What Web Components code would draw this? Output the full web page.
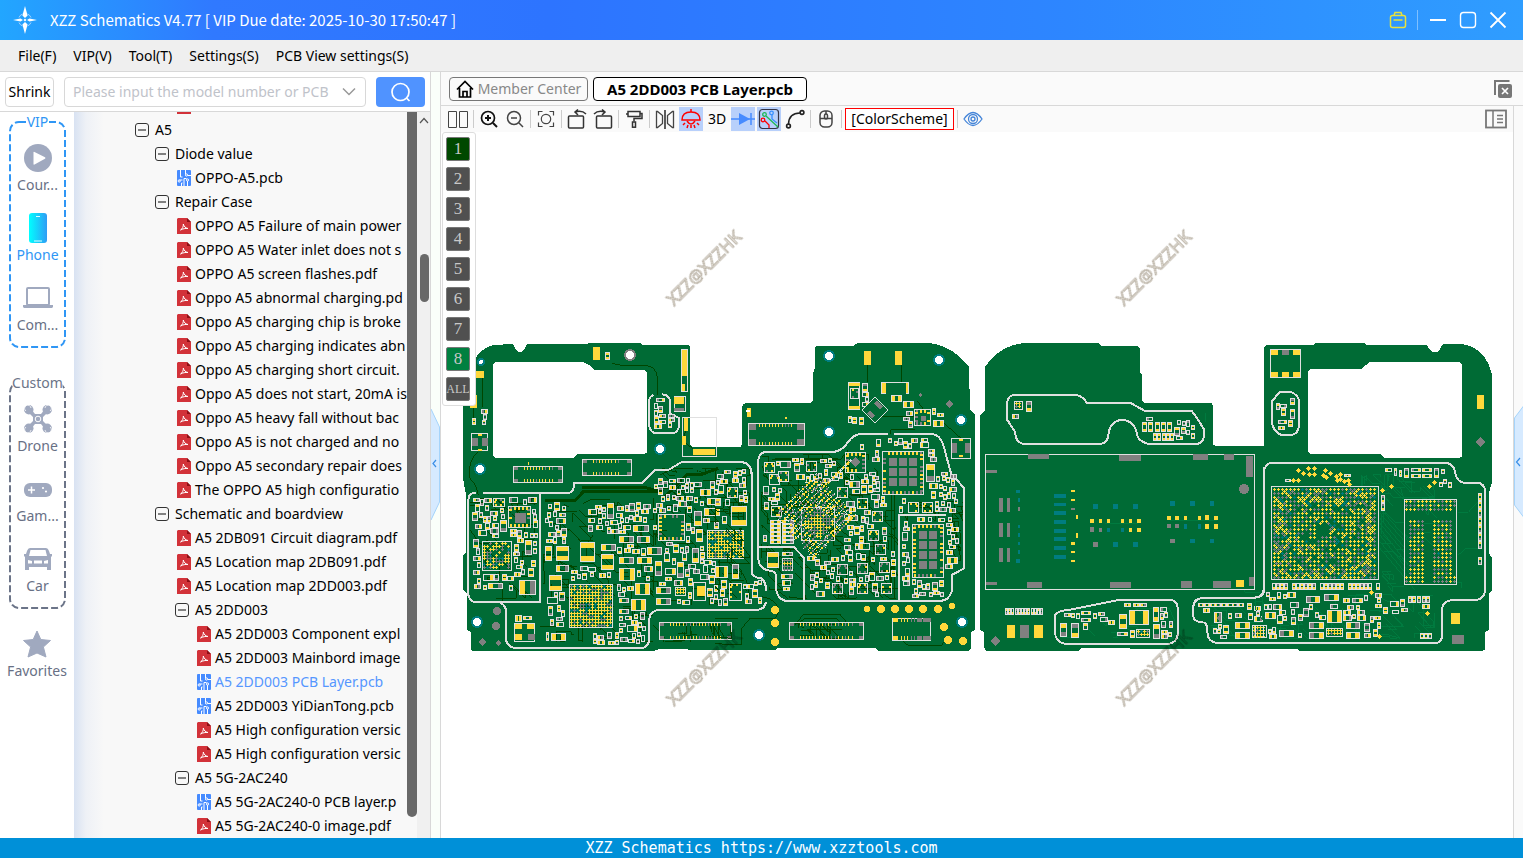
<!DOCTYPE html>
<html lang="en">
<head>
<meta charset="utf-8">
<title>XZZ Schematics</title>
<style>
html,body{margin:0;height:100%}
body{font:14px/20px "Noto Sans","Open Sans",sans-serif;color:#000;background:#fff;overflow:hidden}
</style>
</head>
<body>
<xzz-app></xzz-app>
<script>
const BASE = '*{box-sizing:border-box}button{font:inherit;color:inherit;background:none;border:0;padding:0;margin:0;display:flex;align-items:center;justify-content:center}svg{display:block}';
function define(name, css, html, init) {
  const t = document.createElement('template');
  customElements.define(name, class extends HTMLElement {
    connectedCallback() {
      if (this.shadowRoot) return;
      t.innerHTML = `<style>${BASE}${css}</style>${typeof html === 'function' ? html(this) : html}`;
      this.attachShadow({mode: 'open'}).append(t.content.cloneNode(true));
      if (init) init(this.shadowRoot, this);
    }
  });
}

/* ---------- icons ---------- */
const G = '#a0a9bf';
const ICONS = {
  logo: [28, '<g fill="#fff"><path d="M14 0l2.600 9.500L14 12l-2.600-2.500zM14 28l-2.600-9.500L14 16l2.600 2.500zM2 14l7.500-1.500L12 14l-2.500 1.500zM26 14l-7.500-1.500L16 14l2.500 1.500z"/><path d="M14 12.500l1.500 1.500-1.500 1.500-1.500-1.500z"/></g><g fill="none" stroke="#a8d4ff" stroke-width="1"><path d="M8 11.500A6.500 6.500 0 0 1 11.500 8M16.500 8A6.500 6.500 0 0 1 20 11.500M20 16.500A6.500 6.500 0 0 1 16.500 20M11.500 20A6.500 6.500 0 0 1 8 16.500"/></g>'],
  bag: [18, '<g fill="none" stroke="#e8e23c" stroke-width="1.500"><rect x="1.500" y="4.500" width="15" height="12" rx="2"/><path d="M5 4.500l1-3h6l1 3M4.500 9h9"/></g>'],
  min: [18, '<path d="M1 9h16" stroke="#fff" stroke-width="2"/>'],
  max: [18, '<rect x="1.500" y="1.500" width="15" height="15" rx="3" fill="none" stroke="#fff" stroke-width="1.400"/>'],
  close: [18, '<path d="M1.500 1.500l15 15M16.500 1.500l-15 15" stroke="#fff" stroke-width="1.800"/>'],
  chevron: [16, '<path d="M2 4.500l6 6 6-6" fill="none" stroke="#999" stroke-width="1.500"/>'],
  search: [22, '<circle cx="10.500" cy="11" r="8.500" fill="none" stroke="#fff" stroke-width="1.700"/><path d="M16.500 17l3 3" stroke="#fff" stroke-width="1.700"/>'],
  play: [28, `<circle cx="14" cy="14" r="14" fill="${G}"/><path d="M9.500 8.500Q9.500 7.500 10.500 8L21 13.300Q22 14 21 14.700L10.500 20.500Q9.500 21 9.500 20z" fill="#fff"/>`],
  phone: [32, '<defs><linearGradient id="p"><stop stop-color="#0ff"/><stop offset="1" stop-color="#2f9cf5"/></linearGradient></defs><rect x="7" y="1" width="18" height="30" rx="3" fill="url(#p)"/><path d="M14 4.500h4M12 29h8" stroke="#dff" stroke-width="1.200"/>'],
  laptop: [30, `<rect x="4" y="5" width="22" height="17" rx="1" fill="none" stroke="${G}" stroke-width="2"/><path d="M0 22h12v1h6v-1h12v2l-1 1H1l-1-1z" fill="${G}"/>`],
  drone: [28, `<g fill="${G}"><circle cx="4.800" cy="4.800" r="4.700"/><circle cx="23.200" cy="4.800" r="4.700"/><circle cx="4.800" cy="23.200" r="4.700"/><circle cx="23.200" cy="23.200" r="4.700"/><path d="M4 7l3-3 4 5h6l4-5 3 3-5 5v4l5 5-3 3-4-5h-6l-4 5-3-3 5-5v-4z"/></g><circle cx="14" cy="14" r="2.800" fill="none" stroke="#fff"/><g fill="none" stroke="#fff" stroke-width=".8"><path d="M2 6a3.200 3.200 0 1 1 5-3M21 3a3.200 3.200 0 1 1 5 3M2 22a3.200 3.200 0 1 0 5 3M21 25a3.200 3.200 0 1 0 5-3"/></g>`],
  pad: [28, `<rect y="8" width="28" height="14" rx="6" fill="${G}"/><path d="M4 15h7M7.500 11.500v7" stroke="#fff" stroke-width="1.500"/><circle cx="19" cy="13" r="1.100" fill="#fff"/><circle cx="22" cy="16.500" r="1.100" fill="#fff"/>`],
  car: [28, `<path d="M6 3h16q2 0 3 3l1 3 2 0v2l-1 1v13h-4v-3H5v3H1V12L0 11V9h2l1-3q1-3 3-3z" fill="${G}"/><path d="M6.500 5h15L23 11H5zM4 15l4 1v2.500H4zM24 15l-4 1v2.500h4zM10 15.500h8v3h-8z" fill="#fff"/>`],
  star: [28, `<path d="M14 1l3.800 8.500 9.700 1-7.100 6.500 2.600 10L14 23l-9 4 2.600-10L.5 10.500l9.700-1z" fill="${G}" stroke="${G}" stroke-linejoin="round"/>`],
  minus: [14, '<rect x=".5" y=".5" width="13" height="13" rx="2.500" fill="none" stroke="#333"/><path d="M3 7h8" stroke="#333" stroke-width="1.200"/>'],
  pdf: [16, '<path d="M2 0h9l4 4v12H1V1z" fill="#d23239"/><path d="M11 0v4h4z" fill="#8e0f15"/><path d="M4.500 12C6.300 11 7.600 8.500 7.300 6c.8 2.600 2 4 4.700 4.500-2.800-.3-5 .3-7.500 1.500z" fill="none" stroke="#fff" stroke-width="1"/>'],
  pcb: [16, '<rect x="1" width="14" height="16" rx="1" fill="#468bff"/><g fill="none" stroke="#fff" stroke-width="1"><path d="M4.500 0v7h2M9.500 0v4M3.500 10h3M8 16V8.500h2.500M5.500 16v-3h1M11.500 16v-5M12 5.500h3"/><circle cx="3.200" cy="11" r="1.100"/><circle cx="10.500" cy="5" r="1.100"/><circle cx="11.500" cy="10" r="1.100"/></g>'],
  home: [18, '<path d="M1 9.500L9 1.500l8 8M3.500 8v9h11V8M7 17v-5.500h4V17" fill="none" stroke="#000" stroke-width="1.700"/>'],
  closeall: [18, '<path d="M1 15V1H15.500" fill="none" stroke="#777" stroke-width="2"/><rect x="4" y="4" width="14" height="14" rx="2" fill="#777"/><path d="M8 8l6 6M14 8l-6 6" stroke="#fff" stroke-width="1.700"/>'],
  panel: [22, '<rect x="1" y="2.500" width="20" height="17" fill="none" stroke="#777" stroke-width="1.800"/><path d="M8 3v16" stroke="#777" stroke-width="1.500"/><path d="M12 7.500h6M12 11h6M12 14.500h6" stroke="#777" stroke-width="1.500"/>'],
  cols: [20, '<path d="M.5 2.500h8v16h-8zM11.500 2.500h8v16h-8z" fill="none" stroke="#444"/>'],
  zin: [18, '<circle cx="8" cy="8" r="6.500" fill="none" stroke="#111" stroke-width="1.700"/><path d="M5 8h6M8 5v6" stroke="#111" stroke-width="2"/><path d="M13 13l4 4" stroke="#111" stroke-width="2"/>'],
  zout: [18, '<circle cx="8" cy="8" r="6.500" fill="none" stroke="#444" stroke-width="1.500"/><path d="M5 8h6M13 13l4 4" stroke="#444" stroke-width="1.500"/>'],
  focus: [18, '<g fill="none" stroke="#444" stroke-width="1.200"><path d="M1.500 5.500v-4h4M12.500 1.500h4v4M16.500 12.500v4h-4M5.500 16.500h-4v-4"/><circle cx="9" cy="9" r="4.700"/></g>'],
  rotl: [20, '<g fill="none" stroke="#333" stroke-width="1.500"><rect x="1.500" y="7" width="15" height="12" rx="1"/><path d="M19 5Q15 1 8 3M11 .5L8 3l3 3"/></g>'],
  rotr: [20, '<g fill="none" stroke="#333" stroke-width="1.500"><rect x="3.500" y="7" width="15" height="12" rx="1"/><path d="M1 5Q5 1 12 3M9 .5L12 3 9 6"/></g>'],
  roller: [18, '<g fill="none" stroke="#333" stroke-width="1.500"><path d="M3 1.500h12v5H3zM15 3.500h2v5H9v3M1 4h2"/><rect x="7.500" y="12" width="3" height="5.200"/></g>'],
  flip: [20, '<g fill="none" stroke="#444" stroke-width="1.300"><path d="M1.500 2.500h1l5 4v8l-5 4h-1zM18.500 2.500h-1l-5 4v8l5 4h1z"/></g><path d="M10 1v19" stroke="#333" stroke-width="1.600"/>'],
  lamp: [22, '<g fill="none" stroke="#f00" stroke-width="1.500"><path d="M2 12q0-8 9-8t9 8z"/><path d="M11 4V1M7 13q4 6 8 0M5 15l-2 2M17 15l2 2M8 17l-1 3M14 17l1 3M11 17v3"/></g>'],
  diode: [24, '<path d="M0 12h24M20 6v12" stroke="#468bff" stroke-width="1.500"/><path d="M8 6l11 6-11 6z" fill="#468bff"/>'],
  net: [22, '<rect x="1.500" y="1.500" width="19" height="19" rx="3" fill="none" stroke="#334" stroke-width="1.200"/><g fill="none" stroke-width="1.300"><path d="M8 8l12 11" stroke="#1db954"/><circle cx="6.500" cy="6.500" r="1.800" stroke="#1db954"/><path d="M14 7v4l5 4" stroke="#3890ff"/><circle cx="13.500" cy="5" r="1.800" stroke="#3890ff"/><path d="M7 13l4 4v3" stroke="#f00"/><circle cx="5" cy="12" r="1.800" stroke="#f00"/></g>'],
  curve: [20, '<g fill="none" stroke="#222" stroke-width="1.600"><path d="M3.500 15Q4 4 15 4"/><circle cx="3.500" cy="17" r="1.900"/><circle cx="17" cy="3.500" r="1.900"/></g>'],
  mouse: [18, '<g fill="none" stroke="#444" stroke-width="1.500"><rect x="3" y="1" width="12" height="16" rx="4.500"/><path d="M3 8.500h12M9 1v3"/><rect x="7.500" y="4" width="3" height="5" rx="1.500"/></g>'],
  eye: [20, '<g fill="none" stroke="#4585d8" stroke-width="1.300"><path d="M1 10q9-13 18 0-9 13-18 0z"/><circle cx="10" cy="10" r="4.500"/><circle cx="10" cy="10" r="2"/></g>'],
  up: [14, '<path d="M3 9l4-4.500L11 9" fill="none" stroke="#555" stroke-width="1.200"/>']
};
define('ui-icon', ':host{display:block;flex:none}', h => {
  const [s, d] = ICONS[h.getAttribute('name')];
  return `<svg width="${s}" height="${s}" viewBox="0 0 ${s} ${s}" aria-hidden="true">${d}</svg>`;
});
const icon = n => `<ui-icon name="${n}"></ui-icon>`;

/* ---------- window chrome ---------- */
define('title-bar', `:host{display:flex;align-items:center;height:40px;padding:0 16px 0 11px;gap:11px;color:#fff;background:linear-gradient(90deg,#22a6ff,#3079ff 14%,#2d74ff 36%,#2d86ff 70%,#2f9dff)}
h1{font:15px/20px "Noto Sans CJK SC","Noto Sans",sans-serif;margin:0;flex:1;white-space:pre}div{display:flex;gap:12px;align-items:center}i{width:1px;height:20px;background:#7fc0ff;margin:0 -1px 0 -2px}`,
`${icon('logo')}<h1>XZZ Schematics V4.77 [ VIP Due date: 2025-10-30 17:50:47 ]</h1>
<div><button aria-label="Account">${icon('bag')}</button><i></i><button aria-label="Minimize">${icon('min')}</button><button aria-label="Maximize">${icon('max')}</button><button aria-label="Close">${icon('close')}</button></div>`);

define('menu-bar', ':host{display:flex;height:32px;align-items:center;padding:0 18px;gap:17px;background:#efefef;border-bottom:1px solid #d8d8d8}',
  ['File(F)', 'VIP(V)', 'Tool(T)', 'Settings(S)', 'PCB View settings(S)'].map(t => `<button>${t}</button>`).join(''));

define('search-row', `:host{display:flex;gap:10px;padding:5px 5px 4px;height:40px;border-bottom:1px solid #d8d8d8;background:#fff}
.s{width:49px;border:1px solid #d8d8d8;border-radius:4px}
label{flex:1;display:flex;align-items:center;border:1px solid #d8d8d8;border-radius:4px;padding:0 8px;min-width:0}
input{flex:1;min-width:0;border:0;outline:0;padding:0;font:inherit;background:none}input::placeholder{color:#bfc3ca;opacity:1}
.g{width:49px;background:#5093ff;border-radius:4px}`,
`<button class="s">Shrink</button><label><input aria-label="Model" placeholder="Please input the model number or PCB">${icon('chevron')}</label><button class="g" aria-label="Search">${icon('search')}</button>`);

/* ---------- side navigation ---------- */
define('nav-item', `:host{display:block}button{width:100%;flex-direction:column;justify-content:flex-start;padding-top:4px;height:56px;gap:3px;color:#687085}
:host([on]) button{color:#2f96f5}span{height:28px;display:flex;align-items:center}`,
  h => `<button><span>${icon(h.getAttribute('icon'))}</span><slot></slot></button>`);
define('nav-group', `:host{display:flex;flex-direction:column;gap:14px;position:relative;margin:10px 8px 0 9px;padding:18px 0 11px;--c:#6b7488}
:host([blue]){--c:#2f96f5}
svg{position:absolute;inset:0;width:100%;height:100%;overflow:visible}
b{position:absolute;top:-10px;left:50%;transform:translateX(-50%);font-weight:400;color:var(--c);background:#fff}`,
  h => `<svg aria-hidden="true"><rect x="1" y="0" width="55" height="100%" rx="9" fill="none" stroke="var(--c)" stroke-width="2" stroke-dasharray="7 3"/></svg><b>${h.getAttribute('label')}</b><slot></slot>`);
define('side-nav', ':host{display:block;width:74px;background:#fff}nav-group+nav-group{margin-top:36px}nav-group+nav-item{margin-top:18px}',
`<nav-group label="VIP" blue><nav-item icon="play">Cour...</nav-item><nav-item icon="phone" on>Phone</nav-item><nav-item icon="laptop">Com...</nav-item></nav-group>
<nav-group label="Custom"><nav-item icon="drone">Drone</nav-item><nav-item icon="pad">Gam...</nav-item><nav-item icon="car">Car</nav-item></nav-group>
<nav-item icon="star">Favorites</nav-item>`);

/* ---------- file tree ---------- */
const TREE = [
  [2, 'pdf', ''], [0, 'minus', 'A5'], [1, 'minus', 'Diode value'], [2, 'pcb', 'OPPO-A5.pcb'], [1, 'minus', 'Repair Case'],
  [2, 'pdf', 'OPPO A5 Failure of main power'], [2, 'pdf', 'OPPO A5 Water inlet does not s'], [2, 'pdf', 'OPPO A5 screen flashes.pdf'],
  [2, 'pdf', 'Oppo A5 abnormal charging.pd'], [2, 'pdf', 'Oppo A5 charging chip is broke'], [2, 'pdf', 'Oppo A5 charging indicates abn'],
  [2, 'pdf', 'Oppo A5 charging short circuit.'], [2, 'pdf', 'Oppo A5 does not start, 20mA is'], [2, 'pdf', 'Oppo A5 heavy fall without bac'],
  [2, 'pdf', 'Oppo A5 is not charged and no'], [2, 'pdf', 'Oppo A5 secondary repair does'], [2, 'pdf', 'The OPPO A5 high configuratio'],
  [1, 'minus', 'Schematic and boardview'], [2, 'pdf', 'A5 2DB091 Circuit diagram.pdf'], [2, 'pdf', 'A5 Location map 2DB091.pdf'],
  [2, 'pdf', 'A5 Location map 2DD003.pdf'], [2, 'minus', 'A5 2DD003'], [3, 'pdf', 'A5 2DD003 Component expl'], [3, 'pdf', 'A5 2DD003 Mainbord image'],
  [3, 'pcb', 'A5 2DD003 PCB Layer.pcb', 1], [3, 'pcb', 'A5 2DD003 YiDianTong.pcb'], [3, 'pdf', 'A5 High configuration versic'],
  [3, 'pdf', 'A5 High configuration versic'], [2, 'minus', 'A5 5G-2AC240'], [3, 'pcb', 'A5 5G-2AC240-0 PCB layer.p'], [3, 'pdf', 'A5 5G-2AC240-0 image.pdf']];
define('file-tree', `:host{display:grid;grid-template-columns:1fr 10px 13px;flex:1;min-width:0;overflow:hidden;background:linear-gradient(90deg,#d8e2f2,#eef1f6 12px,#f8f8f8 30px)}
ul{list-style:none;margin:-18px 0 0;padding:0 0 0 61px;overflow:hidden;min-width:0}
li{display:flex;align-items:center;height:24px;white-space:nowrap;padding-left:calc(var(--n)*20px)}
span{width:20px;flex:none}.f{padding-left:1px}a{color:inherit;text-decoration:none}.on{color:#5596ff}
.k{background:#686868;border-radius:0 0 5px 5px;margin-bottom:21px}
.t{background:#f0f0f0;display:flex;flex-direction:column;align-items:center;padding:2px 0 0 1px}.t i{width:9px;height:48px;margin-top:126px;border-radius:5px;background:#686868}`,
`<ul>${TREE.map(([n, k, t, on]) => `<li style="--n:${n}" class="${on ? 'on' : ''}"><span class="${k === 'minus' ? '' : 'f'}">${icon(k)}</span>${k === 'minus' ? t : t && `<a href="#">${t}</a>`}</li>`).join('')}</ul><div class="k"></div><div class="t">${icon('up')}<i></i></div>`);

/* ---------- document area ---------- */
define('doc-tabs', `:host{display:flex;align-items:center;gap:5px;height:34px;padding:0 11px 0 8px;background:#fafafa;border-bottom:1px solid #d8d8d8}
button{height:24px;border-radius:4px}.m{width:139px;gap:4px;border:1px solid #777;color:#888}.a{width:214px;border:1px solid #000;background:#fff;font-size:15px;font-weight:700}.x{margin-left:auto}`,
`<button class="m">${icon('home')}Member Center</button><button class="a">A5 2DD003 PCB Layer.pcb</button><button class="x" aria-label="Close all">${icon('closeall')}</button>`);

define('tool-bar', `:host{display:flex;align-items:center;gap:2px;height:26px;padding:0 5px;background:#fafafa}
button{width:24px;height:24px}.on{background:#b8d0fb}i{width:3px;height:18px;background:linear-gradient(90deg,transparent 1px,#ccc 1px,#ccc 2px,transparent 2px)}
.c{width:109px;height:22px;border:1px solid #f00;background:#fff}.p{margin-left:auto}`,
  ['cols', '', 'zin', 'zout', '', 'focus', '', 'rotl', 'rotr', '', 'roller', '', 'flip', '*lamp', '3D', '*diode', '*net', 'curve', '', 'mouse', '', '[ColorScheme]', '', 'eye', 'panel'].map(n => {
    if (!n) return '<i></i>';
    if (n === '3D') return '<button>3D</button>';
    if (n[0] === '[') return `<button class="c">${n}</button>`;
    const k = n.replace('*', '');
    return `<button aria-label="${k}" class="${n[0] === '*' ? 'on' : n === 'panel' ? 'p' : ''}">${icon(k)}</button>`;
  }).join(''));

define('layer-panel', `:host{display:grid;gap:6px;padding:4px 4px 4px 3px;width:34px;background:#fff;border:1px solid #ddd;border-radius:3px;font:17px/22px "Liberation Serif",serif;color:#c8c8c8}
button{height:24px;width:24px;background:#505050;border:1px solid #777;border-radius:2px}.g{background:#004800}.h{background:#008040}.l{font-size:12px}`,
  [1, 2, 3, 4, 5, 6, 7, 8, 'ALL'].map(n => `<button class="${n === 1 ? 'g' : n === 8 ? 'h' : n === 'ALL' ? 'l' : ''}">${n}</button>`).join(''));

/* ---------- board drawing ---------- */
function drawBoard() {
  let seed = 77;
  const R = () => { seed = seed + 0x6D2B79F5 | 0; let t = Math.imul(seed ^ seed >>> 15, 1 | seed); t ^= t + Math.imul(t ^ t >>> 7, 61 | t); return ((t ^ t >>> 14) >>> 0) / 4294967296; };
  const C = {y: '#ffd83b', g: '#808080', t: '#007d80', w: '#e0e0e0', b: '#006b35', d: '#004600', l: '#007a3f', W: '#fff'};
  let layer = [], ox = 0, oy = 335, used = [];
  const paint = {};
  const X = v => Math.round(ox + v / 3), Y = v => Math.round(oy + v / 3), S = v => Math.max(1, Math.round(v / 3));
  const px = (c, x, y, w, h) => { paint[c] = (paint[c] || '') + `M${x} ${y}h${w}v${h}h${-w}z`; };
  const box = (x, y, w, h) => { px('w', x, y, w, 1); px('w', x, y + h - 1, w, 1); px('w', x, y, 1, h); px('w', x + w - 1, y, 1, h); };
  const use = (x, y, w, h) => used.push([x, y, w, h]);
  const free = (x, y, w, h) => used.every(u => x >= u[0] + u[2] || y >= u[1] + u[3] || x + w <= u[0] || y + h <= u[1]);
  const pick = () => { const r = R(); return r < .55 ? 'y' : r < .85 ? 'g' : 'b'; };
  const rect = (c, x, y, w, h) => px(c, X(x), Y(y), S(w), S(h));
  const rects = (c, list) => list.split(' ').forEach(s => rect(c, ...s.split(',').map(Number)));
  function part(x, y, w, h, a, b) {
    box(x, y, w, h); use(x, y, w, h);
    if (w > h) { const p = Math.max(1, Math.round((w - 2) * .34)); px(a, x + 1, y + 1, p, h - 2); px(b, x + w - 1 - p, y + 1, p, h - 2); }
    else { const p = Math.max(1, Math.round((h - 2) * .34)); px(a, x + 1, y + 1, w - 2, p); px(b, x + 1, y + h - 1 - p, w - 2, p); }
  }
  const cap = (x, y, w, h, k = 'yy', v) => {
    const a = X(x), b = Y(y), c = S(w), d = S(h); box(a, b, c, d); use(a - 1, b - 1, c + 2, d + 2);
    if (v === 'v' || (!v && h > w)) { const p = Math.round((d - 2) * .3); px(k[0], a + 1, b + 1, c - 2, p); px(k[1], a + 1, b + d - 1 - p, c - 2, p); }
    else { const p = Math.round((c - 2) * .3); px(k[0], a + 1, b + 1, p, d - 2); px(k[1], a + c - 1 - p, b + 1, p, d - 2); }
  };
  const conn = (x, y, w, h) => {
    const a = X(x), b = Y(y), c = S(w), d = S(h), e = h > 60 ? 7 : 4; box(a, b, c, d); use(a - 1, b - 1, c + 2, d + 2);
    for (const i of [a + 1, a + c - 1 - e]) for (const j of [b + 1, b + d - e]) px('g', i, j, e, e - 1);
    for (let i = a + 11; i < a + c - 10; i += 3 + (R() < .2)) { px(R() < .75 ? 'y' : 'g', i, b + 1, 1, 3); px(R() < .8 ? 'y' : 'g', i, b + d - 4, 1, 3); }
  };
  const ic = (x, y, w, h, core) => {
    const a = X(x), b = Y(y), c = S(w), d = S(h); box(a, b, c, d); use(a - 1, b - 1, c + 2, d + 2);
    const small = c < 16, s = small ? 5 : 4, q = small ? 2 : 3;
    for (let i = a + 2; i < a + c - 3; i += s) { px(pick(), i, b + 1, 2, q); px(pick(), i, b + d - 1 - q, 2, q); }
    for (let j = b + 3; j < b + d - 4; j += s) { px(pick(), a + 1, j, q, 2); px(pick(), a + c - 1 - q, j, q, 2); }
    if (core) { const [n, m] = core, gx = Math.floor((c - 12) / n), gy = Math.floor((d - 12) / m); for (let i = 0; i < n; i++) for (let j = 0; j < m; j++) px('g', a + 7 + i * gx, b + 7 + j * gy, gx - (n > 1) * 2, gy - (m > 1) * 2); }
  };
  const plus = (c, x, y) => { px(c, x - 1, y, 3, 1); px(c, x, y - 1, 1, 3); };
  const bga = (x, y, w, h, p, ky, kt, keep, q = p) => {
    const a = X(x), b = Y(y), c = S(w), d = S(h); box(a, b, c, d); use(a - 1, b - 1, c + 2, d + 2);
    for (let i = a + 2; i < a + c - 1; i += p) for (let j = b + 2; j < b + d - 1; j += q) {
      if (keep && !keep((i - a) / c, (j - b) / d)) continue;
      const r = R(); plus(r < ky ? 'y' : r < kt ? 't' : 'g', i, j);
    }
  };
  const sizes = [[4, 7], [7, 4], [5, 8], [8, 5], [5, 7], [7, 5], [4, 6], [9, 6], [6, 9], [4, 5], [11, 7]];
  const fill = (x, y, w, h, n) => {
    const a = X(x), b = Y(y), c = S(w), d = S(h);
    for (let k = 0; k < n; k++) {
      const [u, v] = sizes[Math.floor(R() * sizes.length)], i = a + Math.floor(R() * (c - u)), j = b + Math.floor(R() * (d - v));
      if (c > u && d > v && free(i, j, u, v)) part(i, j, u, v, pick(), pick());
    }
  };
  const flush = () => { for (const k of ['t', 'w', 'g', 'y', 'b', 'W']) if (paint[k]) { layer.push(`<path fill="${C[k]}" d="${paint[k]}"/>`); paint[k] = ''; } };
  const lines = (c, w, d) => layer.push(`<g transform="translate(${ox} ${oy}) scale(.33333)"><path fill="none" stroke="${C[c]}" stroke-width="${w * 3}" d="${d}"/></g>`);
  const traces = (c, x, y, w, h, n) => {
    let d = '';
    for (let i = 0; i < n; i++) {
      let a = x + R() * w, b = y + R() * h; d += `M${a | 0} ${b | 0}`;
      for (let k = 0; k < 4; k++) { const s = (R() - .5) * 90, m = R(); a = Math.min(x + w, Math.max(x, a + (m < .7 ? s : 0))); b = Math.min(y + h, Math.max(y, b + (m > .35 ? s : 0))); d += `L${a | 0} ${b | 0}`; }
    }
    lines(c, 1, d);
  };
  const dot = (c, x, y, r) => layer.push(`<circle fill="${C[c]}" cx="${X(x)}" cy="${Y(y)}" r="${r}"/>`);
  const via = (x, y, r = 4, c = 't') => { dot(c, x, y, r + 2); dot('W', x, y, r); };
  const dia = (x, y, r) => layer.push(`<path fill="${C.g}" d="M${X(x)} ${Y(y) - r}l${r} ${r}l${-r} ${r}l${-r} ${-r}z"/>`);

  layer.push(`<path fill="${C.b}" fill-rule="evenodd" d="M463 407Q466 352 493 345L513 344L515 348Q520 356 525 348L527 344H587L589 343H640L643 345H687Q690 345 690 348V443Q690 447 694 447H739Q742 447 742 443V407Q743 403 747 403H809Q813 403 813 399V373L815 368V349Q815 346 818 346H853L858 343H928Q952 345 969 367L970 410L975 415V628Q975 631 971 632V647Q971 651 967 651H878L875 648H778L775 650H715L660 649L653 651H474Q471 651 471 648V632L467 630V593L463 590V555L466 553V495L463 478Z
M493 366Q493 362 497 362H582Q588 363 592 368L595 370H643Q647 370 647 374V451Q647 454 643 454H577L573 458H497Q493 458 493 454Z"/>
<path fill="${C.b}" fill-rule="evenodd" d="M985 367Q1000 345 1025 343H1098L1101 346H1136Q1140 346 1140 350V372L1142 375V399Q1142 403 1146 403H1210Q1213 403 1213 407V443Q1213 446 1217 446H1264V349Q1264 345 1268 345H1313L1315 343H1364L1367 345H1427L1429 349Q1435 356 1440 349L1443 344H1462Q1486 348 1492 375V482L1489 493V553L1492 558V590L1489 594V630L1485 632V648Q1485 651 1481 651H1300L1297 649H1178L1081 648L1078 651H988Q985 651 984 647V632L980 630V415L985 411Z
M1308 373Q1308 369 1312 369H1361L1370 362H1458Q1462 362 1462 366V455Q1462 458 1458 458H1384L1380 454H1312Q1308 454 1308 450Z"/>`);

  /* front side, left half */
  ox = 460;
  lines('d', 1, 'M55 350Q20 380 30 430Q50 450 55 480M455 85L490 92H560Q590 95 592 130V180M67 130V215M40 215V250M127 740V800M240 875H300M370 505L395 493H450M400 600L380 630V680M300 680L340 700V740M680 250L672 320L710 350M600 420L640 400H700M730 420L770 400M580 870L600 890');
  lines('d', 3, 'M255 497H345L370 470H600M365 459H560L610 470 M610 490L680 420H720L775 400');
  traces('d', 30, 490, 205, 300, 25); traces('d', 250, 500, 330, 420, 70); traces('d', 580, 400, 200, 410, 40); traces('d', 610, 870, 170, 50, 10);
  lines('w', 2, 'M68 473H330Q342 470 342 445H545L585 405H625L665 381H780M48 473Q25 473 25 495V780Q30 802 50 802H240V478M120 803Q138 810 138 830V915Q142 935 165 939H550Q568 930 568 910V850Q572 825 600 825H780M580 180Q567 185 567 200V270Q572 295 590 295H640Q655 290 658 270V250L630 235V195Q625 178 605 178');
  conn(160, 394, 150, 50); conn(367, 373, 150, 52); conn(598, 862, 219, 54);
  rects('y', '400,37,20,40 48,108,24,21 30,180,20,38 665,45,16,78 665,148,10,20 672,250,11,38 666,303,11,26 699,343,66,18 642,186,30,22 205,380,3,9'); rects('g', '642,218,30,10');
  box(X(663), Y(43), 7, 43); box(X(642), Y(184), 12, 16); box(X(667), Y(247), 35, 40);
  box(X(34), Y(295), 17, 18); rects('g', '36,309,18,24 66,309,18,24'); rects('y', '54,297,12,6 54,342,12,6');
  ic(145, 514, 70, 66, [1, 1]); ic(595, 538, 80, 82); ic(100, 488, 36, 26);
  bga(66, 617, 90, 90, 3, .5, .65, () => R() < .8); bga(328, 748, 133, 133, 3, .66, .76); bga(742, 586, 110, 88, 3, .72, .87); bga(645, 757, 34, 28, 3, .8, .8);
  for (const v of [[195, 616, 22, 46, 'yg'], [178, 734, 52, 44, 'yg'], [256, 633, 22, 46, 'yy'], [288, 633, 38, 46, 'yy', 'v'], [361, 622, 46, 60, 'yy', 'v'], [424, 656, 38, 48, 'yy', 'v'], [266, 720, 38, 47, 'yy', 'v'], [288, 690, 38, 20, 'yg'], [424, 627, 44, 20, 'yg'], [478, 700, 48, 38, 'yy', 'h'], [526, 745, 46, 37, 'yy', 'h'], [514, 793, 46, 37, 'yy', 'h'], [476, 603, 44, 20, 'yg'], [532, 603, 40, 20, 'gy'], [478, 667, 46, 22, 'yg'], [532, 667, 46, 22, 'yy'], [560, 636, 44, 24, 'yg'], [518, 570, 48, 22, 'yg'], [585, 678, 22, 44, 'yg'], [652, 680, 22, 48, 'yg'], [697, 640, 22, 44, 'gy'], [708, 583, 22, 40, 'yy'], [702, 527, 24, 44, 'gy'], [733, 518, 47, 24, 'yy'], [740, 488, 40, 22, 'yg'], [588, 757, 44, 22, 'yg'], [588, 790, 44, 22, 'yg'], [442, 505, 22, 48, 'yg'], [288, 548, 30, 18, 'gy'], [272, 893, 44, 24, 'yy'], [190, 843, 26, 12, 'yy'], [166, 840, 20, 20, 'yy'], [258, 892, 10, 26, 'yy'], [265, 812, 16, 30, 'yg'], [478, 790, 30, 14, 'yg'], [478, 822, 30, 14, 'yg'], [85, 745, 44, 18, 'yg'], [588, 190, 28, 13, 'gy'], [120, 556, 22, 36, 'yg']]) cap(...v);
  box(X(163), Y(865), 21, 19); use(X(163), Y(865), 21, 19); rects('y', '166,868,20,16 202,868,20,16 166,898,20,18'); rects('g', '204,898,20,18');
  box(X(700), Y(742), 13, 19); use(X(700), Y(742), 13, 19); rects('y', '712,752,24,30');
  fill(35, 485, 200, 125, 500); fill(38, 610, 30, 175, 160); fill(160, 600, 75, 130, 100); fill(38, 715, 135, 60, 130); fill(255, 500, 70, 135, 260); fill(385, 500, 195, 100, 500); fill(262, 770, 60, 110, 130); fill(470, 745, 90, 185, 420); fill(395, 885, 160, 48, 260); fill(580, 430, 200, 385, 900); fill(470, 620, 110, 120, 160); fill(330, 690, 130, 50, 60); fill(582, 205, 40, 82, 200); fill(625, 235, 25, 50, 50); fill(435, 48, 24, 34, 20); fill(60, 215, 26, 70, 30); fill(35, 250, 14, 24, 10);
  flush();
  via(64, 82, 2); via(61, 401); via(600, 343); via(52, 862); via(511, 61, 4, 'g');
  dot('g', 112, 829, 4); dot('g', 109, 872, 4); dia(66, 922, 4); dia(115, 925, 3);

  /* front side, right half */
  ox = 715;
  lines('d', 1, 'M457 90V142M559 90V150M480 244H600M625 222L607 198M680 258L738 310M140 785Q185 790 192 830L180 850H105L80 880V930L0 926M0 850H70M240 870L265 838H375L395 862M250 880V865L270 850H365L380 870M290 885H380M560 915L580 932H680L690 915M528 297V285H600M170 375H375L400 345M180 370H370M540 480V790M530 480V780');
  traces('d', 0, 400, 105, 410, 30); traces('d', 140, 360, 410, 430, 120); traces('d', 560, 500, 185, 60, 14); traces('d', 10, 870, 40, 40, 3); traces('d', 710, 560, 28, 140, 9); traces('d', 240, 865, 190, 45, 10);
  lines('w', 2, 'M0 381H80Q110 385 110 420V715Q120 730 140 730Q152 740 153 760V768M0 825H120Q150 825 153 800M130 635V375Q132 350 160 350H360Q385 345 400 320Q415 298 440 297H520M538 297H650Q675 298 685 330L708 415L748 460V700L710 720V770Q700 797 680 797H210Q185 790 183 760V720Q180 708 160 706Q130 700 130 670V635H235L267 668V797M552 797V540H692');
  conn(100, 263, 171, 68); conn(223, 862, 225, 54);
  rects('y', '447,48,21,42 540,48,21,42 97,220,11,28'); rect('W', 94, 226, 12, 6);
  box(X(532), Y(848), 39, 23); rects('y', '534,850,16,12 534,902,16,12 558,850,4,12 567,850,4,12 576,850,4,12 558,902,4,12 567,902,4,12 576,902,4,12'); rects('g', '605,850,14,12 624,850,24,12 605,902,14,12 624,902,24,12 588,850,4,12 597,850,4,12 588,902,4,12 597,902,4,12');
  ic(501, 349, 125, 133, [3, 3]); ic(590, 566, 96, 162, [2, 4]); ic(598, 221, 52, 52, [1, 1]); ic(391, 350, 62, 62);
  box(X(708), Y(310), 20, 21); rects('g', '711,325,16,30 750,325,15,30'); rects('y', '732,312,12,6 732,360,12,6'); use(X(708), Y(310), 20, 21);
  ic(404, 160, 28, 34); box(X(400), Y(142), 12, 28); rects('y', '402,144,33,10 402,214,33,10'); use(X(400), Y(142), 12, 28);
  cap(499, 142, 84, 36, 'yy', 'h'); rect('b', 512, 144, 60, 33); ic(518, 146, 28, 28);
  ic(42, 744, 40, 54); cap(48, 512, 48, 60, 'yy', 'v'); cap(157, 650, 36, 47, 'yy', 'v'); cap(634, 386, 26, 54, 'yg', 'v'); cap(0, 694, 40, 36, 'yy', 'h'); cap(50, 686, 22, 46, 'gy'); cap(0, 488, 18, 24, 'yy'); cap(202, 652, 32, 12, 'yg'); cap(198, 718, 36, 16, 'yg');
  bga(202, 670, 32, 40, 3, .6, .6);
  for (const [x, y] of [[426, 490], [470, 528], [458, 586], [480, 628], [427, 683], [492, 680], [352, 744], [427, 744], [498, 744], [168, 512], [190, 408], [272, 378], [366, 455], [146, 380], [162, 418], [36, 455], [366, 686], [578, 500], [620, 500]]) ic(x, y, 32, 32);
  /* processor turned by 45 degrees with the parts around it */
  const cx = X(305), cy = Y(540); use(cx - 27, cy - 32, 54, 70);
  for (let i = -44; i < 44; i++) for (let j = -44; j < 44; j++) {
    const m = Math.abs(i * 1.1 + 3) + Math.abs(j), dx = cx + i, dy = cy + j, q = Math.abs(dx - X(308)) + Math.abs(dy - Y(565));
    if (m >= 44) continue;
    if (q < 17) { if (i % 3 === 0 && j % 3 === 0) plus(R() < .6 ? 'y' : 'g', dx, dy); }
    else if ((i + j) % 6 === 0 && (i - j) % 4 === 0 && R() < .8) { const c = R() < .5 ? 'y' : 'g'; px(c, dx, dy, 2, 2); px('w', dx - 1, dy + 2, 1, 1); px('w', dx + 2, dy - 1, 1, 1); }
    else if (R() < .13) px(R() < .75 ? 'w' : 'y', dx, dy, 1, 1);
  }
  box(X(259), Y(517), 34, 34);
  for (let k = 0; k < 14; k++) plus(k % 3 ? 'w' : 'y', X(340 + k * 5), Y(440 - k * 5));
  for (let j = 0; j < 6; j++) { part(X(166), Y(555 + j * 12), 11, 4, 'y', 'y'); part(X(202), Y(555 + j * 12), 12, 4, 'y', 'g'); }
  fill(0, 395, 100, 90, 150); fill(20, 440, 82, 280, 220); fill(0, 735, 145, 80, 260); fill(145, 368, 230, 80, 500); fill(145, 430, 60, 100, 130); fill(145, 590, 100, 35, 60); fill(340, 400, 180, 390, 1000); fill(275, 640, 270, 150, 150); fill(470, 310, 30, 90, 100); fill(515, 310, 130, 35, 200); fill(640, 340, 35, 200, 200); fill(660, 410, 75, 110, 260); fill(552, 485, 180, 50, 160); fill(560, 550, 26, 210, 260); fill(690, 560, 44, 150, 260); fill(590, 730, 105, 62, 400); fill(200, 650, 40, 120, 60); fill(440, 140, 24, 80, 60); fill(400, 238, 50, 40, 100); fill(518, 180, 50, 24, 60); fill(565, 195, 36, 90, 30); fill(650, 220, 40, 60, 60); fill(435, 318, 22, 30, 30); fill(590, 545, 130, 18, 60);
  flush();
  layer.push(`<g transform="translate(${X(479)} ${Y(226)}) rotate(45)"><path fill="${C.b}" stroke="${C.w}" d="M-9 -9h18v18h-18z"/><path fill="${C.g}" d="M-5 -8h8v4h-8zM-3 4h7v4h-7z"/></g><path fill="${C.g}" d="M${X(420)} ${Y(367)}l5 5l-5 5l-5 -5z"/>`);
  via(343, 64); via(672, 76); via(738, 256); via(343, 292); via(133, 901); via(741, 862); dia(616, 181, 2); dia(703, 207, 4);
  for (const [x, y, r] of [[181, 824, 4], [181, 865, 4], [181, 922, 4], [457, 823, 3], [499, 823, 4], [541, 823, 4], [583, 823, 4], [625, 823, 4], [669, 823, 4], [712, 814, 3], [687, 875, 4], [700, 916, 4], [745, 919, 4], [214, 250, 1]]) dot('y', x, y, r);

  /* back side, left half */
  ox = 975;
  traces('l', 250, 820, 350, 90, 10); traces('l', 700, 800, 165, 115, 12);
  lines('l', 1, 'M390 565H490M585 556H725M692 235V262M810 765V772H850L868 780');
  lines('w', 2, 'M97 200Q100 180 120 180H305Q325 185 335 203H465L510 228H650Q665 245 688 285Q690 325 665 327H520Q495 320 488 305Q480 255 440 255Q405 257 400 300Q398 325 375 327H145Q122 322 120 290L97 255ZM240 840Q245 828 280 825L430 795H590Q608 800 608 820V900Q605 922 580 927H270Q240 920 240 890ZM868 395V770Q860 788 840 788H690Q655 790 655 815V845Q657 862 690 863Q697 870 697 890Q697 920 725 924H870');
  box(X(31), Y(358), 270, 136);
  rects('g', '160,358,62,16 432,360,66,17 654,358,45,19 747,358,30,17 813,363,20,62 33,404,33,8 33,740,33,8 156,741,45,18 405,741,63,18 618,739,33,20 714,739,54,20 822,727,16,28 72,489,12,41 96,489,9,41 72,564,12,41 96,564,9,41 72,640,12,41 96,640,9,41 129,516,6,11 288,519,12,6 345,576,12,15 372,579,9,12 576,568,12,13 600,568,12,13 354,621,15,15 585,612,15,12 135,870,27,38');
  rects('t', '123,465,12,8 129,489,6,12 129,570,6,9 129,594,6,12 129,621,6,9 129,645,6,12 123,672,12,12 237,477,36,12 237,504,36,9 237,528,36,12 237,555,36,12 237,582,36,12 237,606,36,12 237,633,36,12 237,660,36,12 354,507,15,15 414,507,15,15 474,507,15,15 585,498,15,15 645,498,15,15 705,498,12,15 396,579,9,12 438,579,9,12 627,567,9,15 669,567,9,15 414,621,15,15 474,621,15,15 645,612,15,12 705,612,12,12');
  rects('y', '288,465,12,6 288,492,12,6 303,540,6,12 303,594,6,15 288,621,12,9 288,648,12,6 288,675,12,6 345,552,12,12 372,552,9,12 396,552,9,12 438,552,9,12 461,552,10,12 486,552,12,12 461,579,10,12 486,579,12,12 576,543,12,12 600,543,12,12 627,543,9,12 669,543,9,12 690,540,12,15 717,543,12,12 690,567,12,14 717,567,12,14 783,735,24,20 96,870,24,38 177,870,27,38');
  bga(116, 198, 28, 28, 3, .7, .75); cap(153, 198, 17, 32, 'gy'); cap(462, 826, 60, 46, 'yy', 'h'); cap(432, 838, 23, 44, 'yy'); cap(256, 864, 22, 42, 'yg'); cap(288, 864, 24, 44, 'gy'); cap(534, 868, 22, 46, 'yg'); cap(534, 816, 17, 44, 'yy'); cap(319, 828, 30, 12, 'yy'); cap(319, 848, 30, 12, 'gy'); cap(717, 832, 25, 34, 'yg', 'h'); cap(780, 862, 44, 22, 'yy'); cap(780, 892, 44, 22, 'yy'); cap(426, 892, 32, 13, 'gy');
  bga(484, 882, 42, 28, 3, .7, .8); bga(832, 870, 45, 38, 3, .8, .8);
  for (let i = 0; i < 5; i++) cap(501 + i * 19, 260, 15, 31, 'yy');
  for (let i = 0; i < 12; i++) part(X(90 + i * 9.6), Y(820), 3, 7, pick(), pick());
  for (let i = 0; i < 5; i++) part(X(534 + i * 13), Y(294), 4, 8, 'y', 'y');
  for (let i = 0; i < 8; i++) part(X(670 + i * 17), Y(805), 6, 4, 'y', pick());
  fill(112, 237, 36, 22, 60); fill(500, 246, 50, 16, 40); fill(596, 248, 50, 70, 180); fill(638, 265, 25, 50, 50); fill(268, 830, 50, 30, 80); fill(315, 865, 26, 24, 20); fill(352, 820, 50, 50, 60); fill(400, 845, 25, 26, 10); fill(440, 805, 90, 16, 30); fill(555, 806, 28, 108, 140); fill(580, 850, 18, 60, 20); fill(670, 820, 60, 20, 30); fill(715, 865, 60, 52, 170); fill(745, 835, 60, 20, 20); fill(815, 805, 55, 60, 70); fill(465, 880, 18, 34, 20);
  flush();
  dot('g', 808, 463, 5); dia(60, 919, 5); dia(729, 849, 2);

  /* back side, right half */
  ox = 1255;
  traces('l', 380, 450, 70, 320, 14); traces('l', 320, 420, 220, 70, 18); traces('l', 0, 780, 540, 130, 40); traces('l', 450, 500, 170, 260, 8);
  lines('l', 1, 'M610 532H640L680 488M610 660L630 642H668M375 520L445 600M375 535L445 615M375 550L450 640M375 565L450 655M375 580L460 690M375 600L470 720M375 620L480 750M375 640L480 765');
  lines('w', 2, 'M0 788Q25 785 27 760V410Q30 383 55 383H575Q597 390 600 410Q605 440 625 443H665Q690 445 690 470V770Q685 795 660 795H590Q562 800 562 820V900Q560 924 540 924H0M50 215V200L75 170H105Q132 180 132 200V270Q130 300 105 300H80Q50 290 50 250Z');
  rects('y', '48,45,22,15 114,45,22,15 48,111,22,14 81,111,20,14 114,111,22,14 666,180,21,41 588,835,27,34'); rects('g', '81,45,20,15 591,900,36,26');
  box(X(45), Y(43), 31, 29);
  const sx = X(48), sy = Y(454); box(sx, sy, 108, 94); use(sx, sy, 108, 94);
  for (let j = 0; j < 23; j++) for (let i = 0; i < 26; i++) {
    const edge = i < 4 || j < 4 || j > 18 || i > 22, hole = !edge && ((i > 10 && i < 14 && j > 8 && j < 12) || R() < .12);
    if (hole) continue;
    const g = (i > 10 && i < 16 && j > 8) || (i < 4 && j > 10 && j < 18) || i > 22 && j > 6, r = R();
    const c = g ? (r < .35 ? 'y' : r < .42 ? 't' : 'g') : r < .62 ? 'y' : r < .72 ? 't' : 'g';
    plus(c, sx + 3 + i * 4, sy + 3 + j * 4);
    if (i < 25 && j < 22 && R() < (edge ? .5 : .12)) plus(R() < .5 ? 'y' : R() < .6 ? 'g' : 't', sx + 5 + i * 4, sy + 5 + j * 4);
  }
  bga(448, 491, 160, 258, 4, .58, .6, (u, v) => v < .1 || (v < .16 && u < .9) || (v > .22 && ((u > .04 && u < .34) || (u > .5 && u < .92))) || (v > .9 && (u < .1 || u > .9)));
  for (const [x, y] of [[115, 436], [130, 436], [130, 406], [145, 414], [160, 400], [178, 400], [163, 418], [178, 418], [210, 406], [203, 421], [214, 427], [226, 414], [244, 424], [256, 418], [245, 436], [256, 432], [268, 438], [280, 436], [283, 448], [380, 466], [409, 454], [523, 454], [538, 442], [347, 772], [373, 904], [517, 835]]) { const a = X(x), b = Y(y); px('y', a - 1, b - 1, 3, 3); px('y', a, b - 2, 1, 5); px('y', a - 2, b, 5, 1); }
  for (const v of [[468, 400, 30, 13, 'gy'], [502, 400, 30, 13, 'yy'], [468, 418, 30, 13, 'yy'], [502, 418, 30, 13, 'yy'], [447, 400, 14, 30, 'gy'], [538, 400, 15, 30, 'gy'], [418, 400, 10, 24, 'yg'], [433, 404, 10, 20, 'yy'], [154, 784, 42, 20, 'gy'], [206, 778, 44, 20, 'gy'], [217, 826, 46, 38, 'yy', 'h'], [163, 862, 44, 20, 'gy'], [163, 892, 44, 20, 'gy'], [274, 862, 42, 20, 'yg'], [274, 890, 42, 20, 'yy'], [72, 886, 46, 20, 'gy'], [291, 790, 32, 14, 'gy'], [108, 845, 16, 24, 'gy'], [90, 432, 18, 10, 'gy'], [268, 418, 22, 10, 'yy'], [104, 222, 14, 30, 'yg'], [68, 255, 28, 13, 'gy'], [68, 274, 20, 12, 'yy']]) cap(...v);
  bga(214, 878, 50, 26, 3, .8, .8); bga(0, 870, 28, 38, 3, .8, .8);
  for (let j = 0; j < 7; j++) part(X(670), Y(475 + j * 24), 4, 8, 'y', R() < .5 ? 'y' : 'g');
  part(X(670), Y(667), 4, 8, 'y', 'g');
  for (let j = 0; j < 2; j++) part(X(379), Y(480 + j * 24), 4, 8, 'g', 'y');
  for (let i = 0; i < 27; i++) if (i % 7 !== 4) part(X(50 + i * 12), Y(745), 4, 7, pick(), 'y');
  for (let i = 0; i < 3; i++) part(X(496 + i * 11), Y(893), 4, 6, 'y', pick());
  for (let i = 0; i < 5; i++) part(X(458 + i * 14), Y(782), 4, 7, 'y', pick());
  fill(30, 770, 100, 30, 90); fill(0, 805, 100, 65, 260); fill(100, 800, 120, 60, 26); fill(260, 780, 80, 80, 160); fill(320, 830, 60, 80, 90); fill(360, 765, 24, 60, 40); fill(385, 790, 85, 60, 120); fill(500, 790, 26, 40, 30); fill(550, 425, 45, 35, 80); fill(556, 396, 26, 30, 40); fill(62, 198, 40, 50, 130); fill(95, 185, 28, 35, 30); fill(98, 255, 26, 36, 50); fill(38, 875, 30, 38, 30); fill(120, 895, 42, 18, 12); fill(390, 400, 25, 15, 10); fill(460, 434, 66, 12, 40); fill(220, 805, 40, 20, 20);
  flush();
  dia(674, 321, 5);
  const mark = [[704, 268], [1154, 268], [704, 668], [1154, 668]].map(([x, y]) => `<text x="${x}" y="${y + 6}" transform="rotate(-45 ${x} ${y})">XZZ@XZZHK</text>`).join('');
  return layer.join('') + `<g fill="#f4f1ea" stroke="#b5ada0" stroke-width=".8" font-size="17" text-anchor="middle" shape-rendering="auto" style="mix-blend-mode:multiply">${mark}</g>`;
}
define('board-view', `:host{display:block;position:relative;background:#fff;overflow:hidden;min-width:0;min-height:0}svg{width:100%;height:100%}layer-panel{position:absolute;left:1px;top:0}`,
  () => `<svg viewBox="441 132 1072 706" preserveAspectRatio="xMinYMin meet" shape-rendering="crispEdges" role="img" aria-label="Circuit board">${drawBoard()}</svg><layer-panel></layer-panel>`);

/* ---------- collapsible edge strips ---------- */
define('edge-strip', `:host{display:block;position:relative;background:#fafffa;border-right:1px solid #d8d8d8}
:host([right]){background:#fafafa;border:0;border-left:1px solid #d8d8d8}
button{position:absolute;left:0;top:337px;width:100%;height:111px}
:host([right]) button{top:300px}
svg{width:100%;height:111px}`,
  h => h.hasAttribute('right')
    ? '<button aria-label="Collapse"><svg viewBox="0 0 9 111"><path d="M9.500 0L.5 12v87l9 12" fill="#d6eaff" stroke="#a5d4fb"/><path d="M6 52L2.500 56 6 60" fill="none" stroke="#3a8ee6" stroke-width="1.200"/></svg></button>'
    : '<button aria-label="Collapse"><svg viewBox="0 0 9 111"><path d="M0 0L8.500 18v75L0 111" fill="#d6eaff" stroke="#a5d4fb"/><path d="M5 51L2 54.500 5 58" fill="none" stroke="#3a8ee6" stroke-width="1.200"/></svg></button>');

define('status-bar', ':host{display:flex;align-items:center;justify-content:center;height:20px;background:#0090d8;color:#fff;font:15px/20px "DejaVu Sans Mono",monospace;white-space:pre}', 'XZZ Schematics https://www.xzztools.com');

define('xzz-app', `:host{display:grid;grid-template-rows:auto auto minmax(0,1fr) auto;height:100vh}
main{display:grid;grid-template-columns:431px 10px minmax(0,1fr);min-height:0}
aside{display:flex;flex-direction:column;min-height:0;border-right:1px solid #d8d8d8}.l{display:flex;flex:1;min-height:0}
section{display:flex;flex-direction:column;min-width:0;min-height:0}.b{flex:1;display:grid;grid-template-columns:minmax(0,1fr) 10px;min-height:0}.v{display:grid;grid-template-rows:auto minmax(0,1fr);min-height:0;min-width:0}`,
`<title-bar></title-bar><menu-bar></menu-bar>
<main><aside><search-row></search-row><div class="l"><side-nav></side-nav><file-tree></file-tree></div></aside><edge-strip></edge-strip>
<section><doc-tabs></doc-tabs><div class="b"><div class="v"><tool-bar></tool-bar><board-view></board-view></div><edge-strip right></edge-strip></div></section></main>
<status-bar></status-bar>`);
</script>
</body>
</html>
